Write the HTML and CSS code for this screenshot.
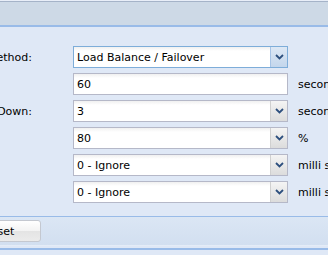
FILE: index.html
```html
<!DOCTYPE html>
<html lang="en">
  <head>
    <meta charset="UTF-8" />
    <title>Health Check</title>
    <link rel="stylesheet" href="styles.css">
  </head>
  <body>
    <div class="window">
      <div class="header"></div>
      <div class="body">
        <form class="form">
          <div class="row">
            <label class="label"><span>Method:</span></label>
            <div class="field combo focus">
              <input type="text" value="Load Balance / Failover" readonly />
              <span class="trigger">
                <svg width="9" height="6" viewBox="0 0 9 6"><polyline points="1,1 4.5,4.5 8,1" fill="none" stroke="#2d4f7e" stroke-width="1.8"/></svg>
              </span>
            </div>
            <span class="unit"></span>
          </div>
          <div class="row">
            <label class="label"><span></span></label>
            <div class="field">
              <input type="text" value="60" />
            </div>
            <span class="unit">seconds</span>
          </div>
          <div class="row">
            <label class="label"><span>Down:</span></label>
            <div class="field combo">
              <input type="text" value="3" readonly />
              <span class="trigger">
                <svg width="9" height="6" viewBox="0 0 9 6"><polyline points="1,1 4.5,4.5 8,1" fill="none" stroke="#2d4f7e" stroke-width="1.8"/></svg>
              </span>
            </div>
            <span class="unit">seconds</span>
          </div>
          <div class="row">
            <label class="label"><span></span></label>
            <div class="field combo">
              <input type="text" value="80" readonly />
              <span class="trigger">
                <svg width="9" height="6" viewBox="0 0 9 6"><polyline points="1,1 4.5,4.5 8,1" fill="none" stroke="#2d4f7e" stroke-width="1.8"/></svg>
              </span>
            </div>
            <span class="unit">%</span>
          </div>
          <div class="row">
            <label class="label"><span></span></label>
            <div class="field combo">
              <input type="text" value="0 - Ignore" readonly />
              <span class="trigger">
                <svg width="9" height="6" viewBox="0 0 9 6"><polyline points="1,1 4.5,4.5 8,1" fill="none" stroke="#2d4f7e" stroke-width="1.8"/></svg>
              </span>
            </div>
            <span class="unit">milli seconds</span>
          </div>
          <div class="row">
            <label class="label"><span></span></label>
            <div class="field combo">
              <input type="text" value="0 - Ignore" readonly />
              <span class="trigger">
                <svg width="9" height="6" viewBox="0 0 9 6"><polyline points="1,1 4.5,4.5 8,1" fill="none" stroke="#2d4f7e" stroke-width="1.8"/></svg>
              </span>
            </div>
            <span class="unit">milli seconds</span>
          </div>
        </form>
      </div>
      <div class="footer">
        <button type="button" class="btn">Reset</button>
      </div>
      <div class="bottom"></div>
    </div>
  </body>
</html>
```

FILE: styles.css
```css
* {
  margin: 0;
  padding: 0;
  box-sizing: border-box;
}

body {
  background-color: #dfe8f6;
  font-family: "DejaVu Sans", sans-serif;
  font-size: 11px;
  color: #000;
  overflow: hidden;
}

.window {
  width: 100%;
  border-top: 1px solid #e8eef8;
}

.header {
  height: 26px;
  background-color: #cdd9e6;
  border-top: 1px solid #a5b3c8;
  border-bottom: 2px solid #99bbe8;
}

.body {
  padding: 19px 0 13px 0;
  border-bottom: 1px solid #99bbe8;
}

.form {
  display: flex;
  flex-direction: column;
  gap: 5px;
}

.row {
  display: flex;
  align-items: center;
  height: 22px;
}

.label {
  flex-shrink: 0;
  width: 32px;
  display: flex;
  justify-content: flex-end;
  white-space: nowrap;
  margin-right: 41px;
}

.field {
  flex-shrink: 0;
  display: flex;
  width: 215px;
  height: 22px;
  border: 1px solid #b5b8c8;
  background: linear-gradient(#f0f0f0, #ffffff 4px);
}

.field input {
  flex: 1;
  min-width: 0;
  border: none;
  outline: none;
  background: transparent;
  font: inherit;
  padding: 0 3px;
  color: #000;
}

.trigger {
  width: 17px;
  display: flex;
  align-items: center;
  justify-content: center;
  background: linear-gradient(#f4f4f4, #dcdcdc);
  border-left: 1px solid #d0d0d0;
}

.field.focus {
  border-color: #7eadd9;
}

.field.focus .trigger {
  background: linear-gradient(#dde8f5, #c3d6ec);
  border-left-color: #a6c3e6;
}

.unit {
  margin-left: 10px;
  white-space: nowrap;
}

.footer {
  height: 29px;
  display: flex;
  align-items: center;
  background: linear-gradient(#dbe6f4, #d2dff0);
  border-bottom: 1px solid #e4ecf7;
}

.btn {
  flex-shrink: 0;
  width: 84px;
  height: 22px;
  margin-left: -43px;
  border: 1px solid #c4c8d0;
  border-radius: 3px;
  background: linear-gradient(#ffffff, #f3f3f3 50%, #e4e4e4 51%, #ebebeb);
  font: inherit;
  color: #000;
}

.bottom {
  height: 8px;
  margin-top: 2px;
  border-top: 2px solid #99bbe8;
  border-bottom: 1px solid #9aa3ad;
}
```
